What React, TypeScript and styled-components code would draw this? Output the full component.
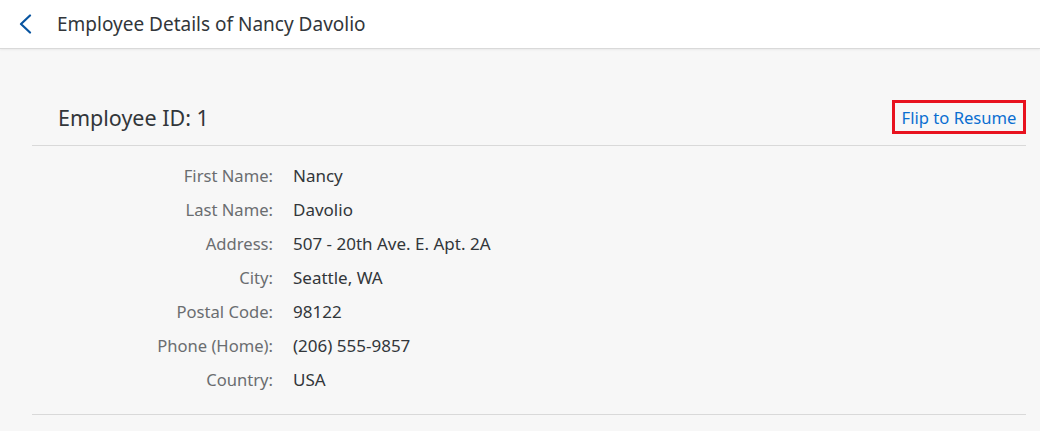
import * as React from "react";
import styled, { createGlobalStyle } from "styled-components";

const GlobalStyle = createGlobalStyle`
  html, body {
    margin: 0;
    padding: 0;
    background: #f7f7f7;
    font-family: "Noto Sans", "Liberation Sans", sans-serif;
  }
`;

interface Field {
  label: string;
  value: string;
}

const FIELDS: Field[] = [
  { label: "First Name:", value: "Nancy" },
  { label: "Last Name:", value: "Davolio" },
  { label: "Address:", value: "507 - 20th Ave. E. Apt. 2A" },
  { label: "City:", value: "Seattle, WA" },
  { label: "Postal Code:", value: "98122" },
  { label: "Phone (Home):", value: "(206) 555-9857" },
  { label: "Country:", value: "USA" },
];

export default function App() {
  return (
    <>
      <GlobalStyle />
      <Page>
        <Header>
          <BackButton aria-label="Back">
            <svg width="14" height="20" viewBox="0 0 14 20">
              <path d="M12 1.5 L3 10 L12 18.5" fill="none" stroke="#0854a0" strokeWidth="2.2" strokeLinecap="round" strokeLinejoin="round" />
            </svg>
          </BackButton>
          <Title>Employee Details of Nancy Davolio</Title>
        </Header>

        <Section>
          <SectionHeader>
            <SectionTitle>Employee ID: 1</SectionTitle>
            <FlipLink href="#">Flip to Resume</FlipLink>
          </SectionHeader>

          <Form>
            {FIELDS.map(field => (
              <React.Fragment key={field.label}>
                <Label>{field.label}</Label>
                <Value>{field.value}</Value>
              </React.Fragment>
            ))}
          </Form>
        </Section>
      </Page>
    </>
  );
}

const Page = styled.div`
  width: 1040px;
  min-height: 431px;
  background: #f7f7f7;
`;

const Header = styled.header`
  display: flex;
  align-items: center;
  height: 48px;
  padding: 0 17px;
  background: #ffffff;
  border-bottom: 1px solid #d9d9d9;
  box-shadow: 0 1px 2px rgba(0, 0, 0, 0.06);
`;

const BackButton = styled.button`
  display: flex;
  align-items: center;
  justify-content: center;
  width: 16px;
  height: 30px;
  margin-right: 24px;
  padding: 0;
  border: none;
  background: none;
  cursor: pointer;
`;

const Title = styled.h1`
  margin: 0;
  color: #32363a;
  font-size: 19px;
  font-weight: 400;
`;

const Section = styled.section`
  margin: 0 14px 0 32px;
  padding-top: 40px;
  border-bottom: 1px solid #d9d9d9;
`;

const SectionHeader = styled.div`
  display: flex;
  align-items: center;
  justify-content: space-between;
  height: 56px;
  padding-left: 26px;
  border-bottom: 1px solid #d9d9d9;
`;

const SectionTitle = styled.h2`
  margin: 0;
  color: #32363a;
  font-size: 21.5px;
  font-weight: 400;
`;

const FlipLink = styled.a`
  display: flex;
  align-items: center;
  justify-content: center;
  width: 134px;
  height: 34px;
  box-sizing: border-box;
  border: 3px solid #e8121f;
  color: #0a6ed1;
  font-size: 16.6px;
  text-decoration: none;
`;

const Form = styled.div`
  display: grid;
  grid-template-columns: 241px 1fr;
  column-gap: 20px;
  grid-auto-rows: 34px;
  padding: 12px 0 18px;
  align-items: center;
`;

const Label = styled.div`
  color: #6a6d70;
  font-size: 16.6px;
  text-align: right;
`;

const Value = styled.div`
  color: #32363a;
  font-size: 17px;
`;
